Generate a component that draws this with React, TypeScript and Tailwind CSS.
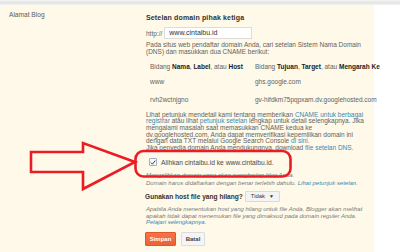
export default function App() {
  const link = "text-[#3a88b5]"
  const dark = "text-[#222] font-bold"

  return (
    <div className="relative w-[400px] h-[252px] overflow-hidden bg-white font-['Liberation_Sans',Arial,sans-serif] text-[#626262]">
      {/* top shadow */}
      <div className="h-[5px] bg-linear-to-b from-[#f4f4f4] via-[#e4e4e4] to-[#f1f1ee]" />

      <div className="flex w-[374px] h-[247px] bg-[#fef9e8]">
        <div className="w-[146px] shrink-0 pl-[9px] pt-[6px] text-[6.6px] leading-[7px] text-[#5c5c5c]">Alamat Blog</div>

        <div className="flex flex-col pt-[9px] text-[6.5px] whitespace-nowrap">
          <div className="h-[7px] leading-[7px] text-[7px] font-bold text-[#333] tracking-[0.15px]">Setelan domain pihak ketiga</div>

          {/* input */}
          <div className="mt-[6px] flex items-center h-[12px]">
            <span className="leading-[7px]">http://</span>
            <div className="ml-[2px] flex items-center w-[88px] h-[12px] border border-[#dcdcdc] bg-white px-[4px] text-[7px] text-[#333]">www.cintaibu.id</div>
          </div>

          <div className="mt-[3px] leading-[6.5px]">
            Pada situs web pendaftar domain Anda, cari setelan Sistem Nama Domain
            <br />
            (DNS) dan masukkan dua CNAME berikut:
          </div>

          {/* table */}
          <div className="mt-[8px] pl-[4px] flex flex-col">
            <div className="flex h-[7px] leading-[7px]">
              <span className="w-[105px]">
                Bidang <b className={dark}>Nama</b>, <b className={dark}>Label</b>, atau <b className={dark}>Host</b>
              </span>
              <span>
                Bidang <b className={dark}>Tujuan</b>, <b className={dark}>Target</b>, atau <b className={dark}>Mengarah Ke</b>
              </span>
            </div>
            <div className="flex h-[7px] leading-[7px] mt-[8px]">
              <span className="w-[105px]">www</span>
              <span>ghs.google.com</span>
            </div>
            <div className="flex h-[7px] leading-[7px] mt-[10.5px]">
              <span className="w-[105px]">rvh2wctnjgno</span>
              <span>gv-hifdkm75pqpxam.dv.googlehosted.com</span>
            </div>
          </div>

          <div className="mt-[9.2px] leading-[6.67px]">
            Lihat petunjuk mendetail kami tentang memberikan <span className={link}>CNAME untuk berbagai</span>
            <br />
            <span className={link}>registrar</span> atau lihat <span className={link}>petunjuk setelan</span> lengkap untuk detail selengkapnya. Jika
            <br />
            mengalami masalah saat memasukkan CNAME kedua ke
            <br />
            dv.googlehosted.com, Anda dapat memverifikasi kepemilikan domain ini
            <br />
            dengan data TXT melalui Google Search Console <span className={link}>di sini.</span>
            <br />
            Jika penyedia domain Anda mendukungnya, download <span className={link}>file setelan DNS.</span>
          </div>

          {/* checkbox */}
          <div className="mt-[6.3px] ml-[3px] flex items-center h-[8px] gap-[4px]">
            <div className="flex items-center justify-center w-[8px] h-[8px] border border-[#9db0c6] bg-[#f7f9fc] rounded-[1px]">
              <svg width="7" height="7" viewBox="0 0 10 10">
                <path d="M1.5 5.2 L4 7.8 L8.8 1.8" fill="none" stroke="#333" strokeWidth="1.6" />
              </svg>
            </div>
            <span className="text-[6.7px] leading-[7px] text-[#4a4a4a]">Alihkan cintaibu.id ke www.cintaibu.id.</span>
          </div>

          <div className="mt-[6px] h-[6px] leading-[6px] text-[6px] italic text-[#7a7a7a]">Mengalihkan domain yang akan menghadap blog Anda.</div>
          <div className="mt-[2.3px] h-[6px] leading-[6px] text-[6px] italic text-[#7a7a7a]">
            Domain harus didaftarkan dengan benar terlebih dahulu. <span className={link}>Lihat petunjuk setelan.</span>
          </div>

          {/* missing host */}
          <div className="mt-[4.7px] flex items-center h-[11px] -ml-[1px]">
            <span className="text-[6.6px] leading-[8px] font-bold text-[#333]">Gunakan host file yang hilang?</span>
            <div className="ml-[2px] flex items-center justify-between w-[35px] h-[11px] border border-[#dadada] bg-[#f4f4f4] rounded-[1px] px-[5px] text-[5.8px] text-[#333]">
              <span>Tidak</span>
              <span className="text-[5px]">▼</span>
            </div>
          </div>

          <div className="mt-[4.4px] leading-[6.25px] text-[6px] italic text-[#7a7a7a]">
            Apabila Anda menentukan host yang hilang untuk file Anda, Blogger akan melihat
            <br />
            apakah tidak dapat menemukan file yang dimaksud pada domain reguler Anda.
            <br />
            <span className={link}>Pelajari selengkapnya.</span>
          </div>

          {/* buttons */}
          <div className="mt-[7px] -ml-[1px] flex gap-[5px]">
            <div className="flex items-center justify-center w-[31px] h-[14px] rounded-[1px] border border-[#e0592d] bg-linear-to-b from-[#f5744a] to-[#ec6232] text-[6px] font-bold text-white">Simpan</div>
            <div className="flex items-center justify-center w-[24px] h-[14px] rounded-[1px] border border-[#dcdcdc] bg-[#f5f5f5] text-[6px] font-bold text-[#444]">Batal</div>
          </div>
        </div>
      </div>

      {/* red annotation */}
      <svg className="absolute left-0 top-0 pointer-events-none" width="400" height="252" viewBox="0 0 400 252">
        <polygon
          points="31,152 83,152 83,143 135,162 83,189 83,172 31,172"
          fill="none"
          stroke="#ec1c24"
          strokeWidth="2.6"
          strokeLinejoin="miter"
        />
        <rect x="135.5" y="151" width="155" height="25.5" rx="8" fill="none" stroke="#ec1c24" strokeWidth="2.6" />
      </svg>
    </div>
  )
}
